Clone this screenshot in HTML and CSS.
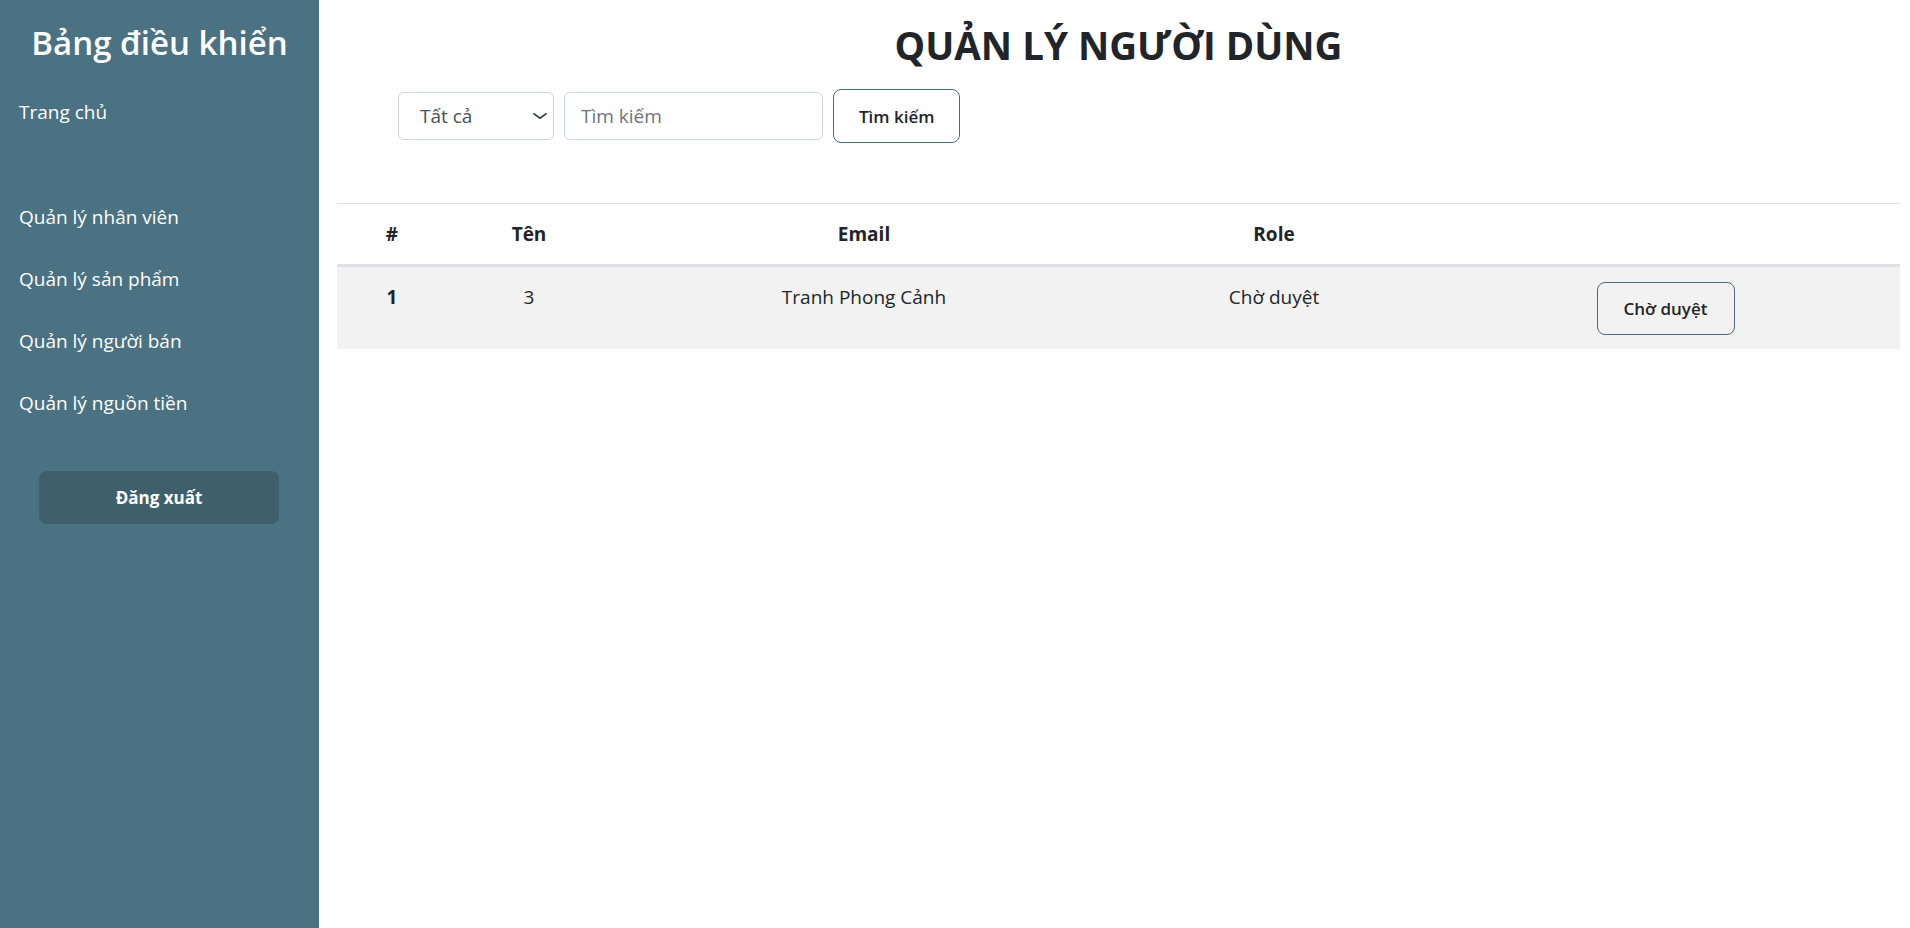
FILE: index.html
```html
<!DOCTYPE html>
<html lang="vi">
<head>
<meta charset="utf-8">
<title>Quản lý người dùng</title>
<link rel="stylesheet" href="styles.css">
</head>
<body>
<div class="layout">
  <aside class="sidebar">
    <h2 class="brand">Bảng điều khiển</h2>
    <nav class="nav">
      <a class="nav-link" href="#">Trang chủ</a>
      <div class="nav-spacer"></div>
      <a class="nav-link" href="#">Quản lý nhân viên</a>
      <a class="nav-link" href="#">Quản lý sản phẩm</a>
      <a class="nav-link" href="#">Quản lý người bán</a>
      <a class="nav-link" href="#">Quản lý nguồn tiền</a>
    </nav>
    <button class="logout" type="button">Đăng xuất</button>
  </aside>
  <main class="main">
    <h1 class="page-title">QUẢN LÝ NGƯỜI DÙNG</h1>
    <form class="search">
      <div class="select-wrap">
        <select class="select">
          <option>Tất cả</option>
        </select>
        <svg class="chevron" viewBox="0 0 16 16" preserveAspectRatio="none" aria-hidden="true">
          <path d="M2 5l6 6 6-6" fill="none" stroke="#343a40" stroke-width="2" stroke-linecap="round" stroke-linejoin="round"/>
        </svg>
      </div>
      <input class="input" type="text" placeholder="Tìm kiếm">
      <button class="btn-outline" type="button">Tìm kiếm</button>
    </form>
    <table class="users">
      <colgroup>
        <col class="c-id"><col class="c-name"><col class="c-email"><col class="c-role"><col class="c-act">
      </colgroup>
      <thead>
        <tr><th>#</th><th>Tên</th><th>Email</th><th>Role</th><th></th></tr>
      </thead>
      <tbody>
        <tr>
          <th>1</th>
          <td>3</td>
          <td>Tranh Phong Cảnh</td>
          <td>Chờ duyệt</td>
          <td><button class="btn-outline" type="button">Chờ duyệt</button></td>
        </tr>
      </tbody>
    </table>
  </main>
</div>
</body>
</html>
```
FILE: styles.css
```css
* { box-sizing: border-box; }
html, body { margin: 0; padding: 0; }
body {
  font-family: "Open Sans", "Noto Sans", sans-serif;
  color: #212529;
  background: #fff;
}
.layout {
  display: flex;
  min-height: 928px;
}
.sidebar {
  width: 319px;
  flex: 0 0 319px;
  background: #4a7282;
  color: #fff;
  display: flex;
  flex-direction: column;
}
.brand {
  margin: 24px 0 19px;
  font-size: 33px;
  line-height: 38px;
  font-weight: 600;
  text-align: center;
}
.nav {
  display: flex;
  flex-direction: column;
}
.nav-link {
  display: block;
  padding: 17.5px 19px;
  font-size: 19px;
  line-height: 27px;
  color: #fff;
  text-decoration: none;
}
.nav-spacer { height: 43px; }
.logout {
  margin: 37px 40px 0 39px;
  height: 53px;
  border: 0;
  border-radius: 8px;
  background: #3f5f6b;
  color: #fff;
  font-family: inherit;
  font-size: 17px;
  font-weight: 700;
}
.main {
  flex: 1;
  padding: 0 10px 0 18px;
  display: flex;
  flex-direction: column;
}
.page-title {
  margin: 21px 0 20px;
  font-size: 38.5px;
  line-height: 48px;
  font-weight: 700;
  text-align: center;
}
.search {
  display: flex;
  align-items: center;
  gap: 10px;
  margin-left: 61px;
}
.select-wrap {
  position: relative;
  width: 156px;
}
.select {
  appearance: none;
  -webkit-appearance: none;
  width: 156px;
  height: 48px;
  padding: 0 30px 0 21px;
  border: 1px solid #ced4da;
  border-radius: 6px;
  background: #fff;
  color: #495057;
  font-family: inherit;
  font-size: 19px;
}
.chevron {
  position: absolute;
  right: 6px;
  top: 18px;
  width: 16px;
  height: 12px;
  pointer-events: none;
}
.input {
  width: 259px;
  height: 48px;
  padding: 0 16px;
  border: 1px solid #ced4da;
  border-radius: 6px;
  font-family: inherit;
  font-size: 19px;
  color: #212529;
}
.input::placeholder { color: #6c757d; }
.btn-outline {
  height: 54px;
  padding: 0 25px;
  border: 1px solid #4a6b7a;
  border-radius: 8px;
  background: transparent;
  color: #212529;
  font-family: inherit;
  font-size: 17px;
  font-weight: 600;
}
.users {
  margin-top: 60px;
  width: 1563px;
  border-collapse: collapse;
  table-layout: fixed;
  border-top: 1px solid #dee2e6;
  font-size: 19px;
  line-height: 30px;
}
.c-id { width: 110px; }
.c-name { width: 164px; }
.c-email { width: 506px; }
.c-role { width: 314px; }
.c-act { width: 469px; }
.users thead th {
  padding: 15px 8px;
  font-weight: 700;
  text-align: center;
  border-bottom: 3px solid #dee2e6;
}
.users tbody tr { background: #f2f2f2; }
.users tbody th,
.users tbody td {
  padding: 15px 8px 14px;
  text-align: center;
  vertical-align: top;
}
.users tbody th { font-weight: 700; }
.users tbody .btn-outline {
  height: 53px;
  width: 138px;
  padding: 0;
  font-size: 17px;
}
```
